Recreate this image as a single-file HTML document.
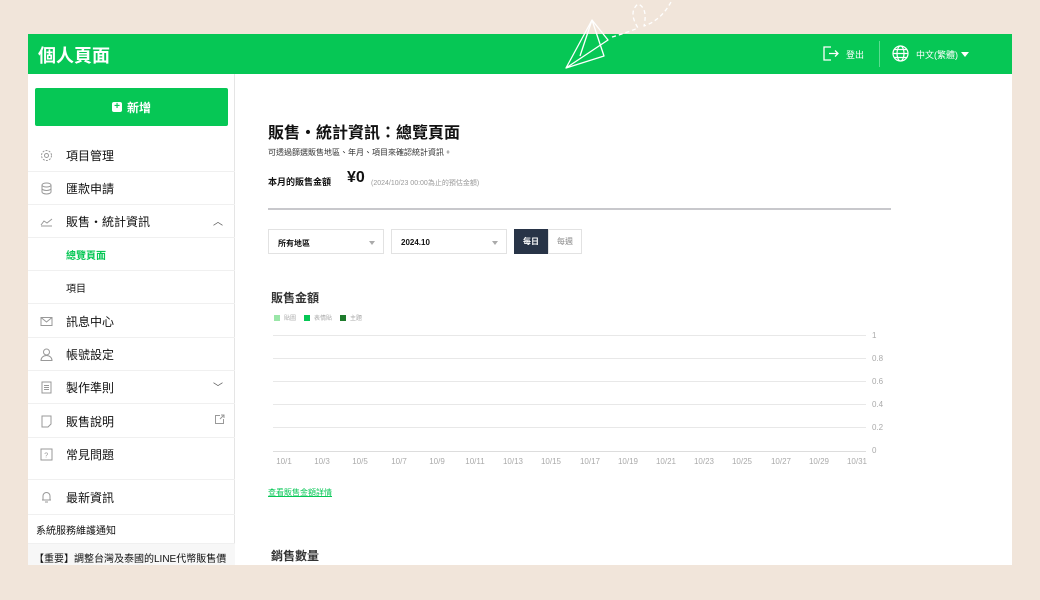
<!DOCTYPE html>
<html><head><meta charset="utf-8"><style>
*{margin:0;padding:0;box-sizing:border-box}
body{width:1040px;height:600px;background:#f1e5da;font-family:"Liberation Sans","Noto Sans CJK TC",sans-serif;position:relative;overflow:hidden;color:#111}
.a{position:absolute}
#hdr{left:28px;top:34px;width:984px;height:40px;background:#06c755}
#main{left:28px;top:74px;width:984px;height:491px;background:#fff;overflow:hidden}
#side{left:0;top:0;width:207px;height:491px;border-right:1px solid #e5e5e5}
.it{position:absolute;left:0;width:207px;height:33px;border-bottom:1px solid #f0f0f0;font-size:12px;display:flex;align-items:center;padding-left:38px}
.ic{position:absolute;left:12px;top:10px;width:13px;height:13px}
.gl{position:absolute;left:245px;width:593px;height:1px;background:#e8e8e8}
.yl{position:absolute;left:844px;font-size:8px;color:#aaa}
.xl{position:absolute;top:383px;font-size:8px;color:#aaa;width:30px;text-align:center}
</style></head><body>
<div id="hdr" class="a">
<div class="a" style="left:10px;top:8px;color:#fff;font-size:18px;font-weight:bold">個人頁面</div>
<svg class="a" style="left:794px;top:11px" width="17" height="17" viewBox="0 0 17 17" fill="none" stroke="#fff" stroke-width="1.3"><path d="M9 2H2v13h7M7 8.5h9M13 5.5l3 3-3 3"/></svg>
<div class="a" style="left:818px;top:14px;color:#fff;font-size:9px">登出</div>
<div class="a" style="left:851px;top:7px;width:1px;height:26px;background:#5bdc8f"></div>
<svg class="a" style="left:864px;top:11px" width="17" height="17" viewBox="0 0 17 17" fill="none" stroke="#fff" stroke-width="1.2"><circle cx="8.5" cy="8.5" r="7.5"/><ellipse cx="8.5" cy="8.5" rx="3.5" ry="7.5"/><path d="M1 8.5h15M2.5 4.5h12M2.5 12.5h12"/></svg>
<div class="a" style="left:888px;top:14px;color:#fff;font-size:9px">中文(繁體)</div>
<div class="a" style="left:933px;top:18px;border:4px solid transparent;border-top:5px solid #fff"></div>
</div>
<svg class="a" style="left:560px;top:0" width="120" height="72" viewBox="0 0 120 72" fill="none" stroke="#fff" stroke-width="1.3" stroke-linejoin="round">
<path d="M6 68 L32 20 L48 40 Z"/>
<path d="M32 20 L44 56 L6 68 M32 20 L20 56"/>
<path d="M52 37 Q66 33 78 28 Q68 12 78 4 Q88 8 84 26 Q102 20 112 0" stroke-dasharray="4 3"/>
</svg>
<div id="main" class="a">
<div id="side" class="a">
<div class="a" style="left:7px;top:14px;width:193px;height:38px;background:#06c755;border-radius:2px;color:#fff;font-size:12px;font-weight:bold;display:flex;align-items:center;justify-content:center"><span style="display:inline-block;width:10px;height:10px;background:#fff;border-radius:2px;margin-right:5px;color:#06c755;font-size:10px;line-height:10px;text-align:center">+</span>新增</div>
<div class="it" style="top:65px"><svg class="ic" viewBox="0 0 13 13" fill="none" stroke="#999"><circle cx="6.5" cy="6.5" r="2"/><circle cx="6.5" cy="6.5" r="5" stroke-dasharray="2 1.2"/></svg>項目管理</div>
<div class="it" style="top:98px"><svg class="ic" viewBox="0 0 13 13" fill="none" stroke="#999"><ellipse cx="6.5" cy="3" rx="4.5" ry="2"/><path d="M2 3v7c0 1 2 2 4.5 2s4.5-1 4.5-2V3M2 6.5c0 1 2 2 4.5 2s4.5-1 4.5-2"/></svg>匯款申請</div>
<div class="it" style="top:131px"><svg class="ic" viewBox="0 0 13 13" fill="none" stroke="#999"><path d="M1 11h11M1 10l3-4 3 2 5-4"/></svg>販售・統計資訊<span class="a" style="right:12px;top:8px;font-size:10px;color:#555">︿</span></div>
<div class="it" style="top:164px;color:#06c755;font-size:10px;font-weight:bold">總覽頁面</div>
<div class="it" style="top:197px;font-size:10px">項目</div>
<div class="it" style="top:231px"><svg class="ic" viewBox="0 0 13 13" fill="none" stroke="#999"><rect x="1" y="2.5" width="11" height="8"/><path d="M1 2.5l5.5 4.5 5.5-4.5"/></svg>訊息中心</div>
<div class="it" style="top:264px"><svg class="ic" viewBox="0 0 13 13" fill="none" stroke="#999"><circle cx="6.5" cy="4" r="3"/><path d="M1 12.5c0-3 2.5-5 5.5-5s5.5 2 5.5 5z"/></svg>帳號設定</div>
<div class="it" style="top:297px"><svg class="ic" viewBox="0 0 13 13" fill="none" stroke="#999"><rect x="2" y="1" width="9" height="11"/><path d="M4 4.5h5M4 6.5h5M4 8.5h5"/></svg>製作準則<span class="a" style="right:12px;top:8px;font-size:10px;color:#555">﹀</span></div>
<div class="it" style="top:331px"><svg class="ic" viewBox="0 0 13 13" fill="none" stroke="#999"><path d="M2 1h9v8l-3 3H2z"/></svg>販售說明<svg class="a" style="right:10px;top:9px" width="11" height="11" viewBox="0 0 11 11" fill="none" stroke="#999"><path d="M6 1.5H1.5v8h8V5M6 5l4-4M7 1h3v3"/></svg></div>
<div class="it" style="top:364px;height:42px;padding-bottom:8px"><svg class="ic" viewBox="0 0 13 13" fill="none" stroke="#999"><rect x="1" y="1" width="11" height="11"/><text x="4.3" y="9.5" font-size="7" fill="#999" stroke="none">?</text></svg>常見問題</div>
<div class="it" style="top:406px;height:35px"><svg class="ic" viewBox="0 0 13 13" fill="none" stroke="#999"><path d="M3 10V6a3.5 3.5 0 017 0v4H2h9M5 12h3"/></svg>最新資訊</div>
<div class="it" style="top:441px;padding-left:8px;font-size:10px;height:29px">系統服務維護通知</div>
<div class="it" style="top:470px;padding-left:6px;font-size:10px;height:22px;background:#f7f7f7;align-items:flex-start;padding-top:6px">【重要】調整台灣及泰國的LINE代幣販售價</div>
</div>
<div class="a" style="left:240px;top:45px;font-size:16px;font-weight:bold">販售・統計資訊：總覽頁面</div>
<div class="a" style="left:240px;top:73px;font-size:8px;color:#333">可透過篩選販售地區、年月、項目來確認統計資訊。</div>
<div class="a" style="left:240px;top:101px;font-size:9px;font-weight:bold">本月的販售金額</div>
<div class="a" style="left:319px;top:95px;font-size:16px;font-weight:bold">¥0</div>
<div class="a" style="left:343px;top:104px;font-size:7px;color:#999">(2024/10/23 00:00為止的預估金額)</div>
<div class="a" style="left:240px;top:134px;width:623px;height:2px;background:#c8c8cc"></div>
<div class="a" style="left:240px;top:155px;width:116px;height:25px;border:1px solid #e2e2e2;font-size:8px;font-weight:bold;padding:8px 9px">所有地區<span class="a" style="right:8px;top:11px;border:3.5px solid transparent;border-top:4px solid #aaa"></span></div>
<div class="a" style="left:363px;top:155px;width:116px;height:25px;border:1px solid #e2e2e2;font-size:8px;font-weight:bold;padding:8px 9px">2024.10<span class="a" style="right:8px;top:11px;border:3.5px solid transparent;border-top:4px solid #aaa"></span></div>
<div class="a" style="left:486px;top:155px;width:34px;height:25px;background:#283447;color:#fff;font-size:8px;font-weight:bold;text-align:center;line-height:25px">每日</div>
<div class="a" style="left:520px;top:155px;width:34px;height:25px;border:1px solid #e2e2e2;color:#888;font-size:8px;text-align:center;line-height:23px">每週</div>
<div class="a" style="left:243px;top:215px;font-size:12px;font-weight:bold;color:#333">販售金額</div>
<div class="a" style="left:246px;top:239px;font-size:6px;color:#aaa;display:flex;gap:4px;align-items:center"><i style="width:6px;height:6px;background:#9ae6a8"></i>貼圖 <i style="width:6px;height:6px;background:#06c755;margin-left:4px"></i>表情貼 <i style="width:6px;height:6px;background:#1e7b2c;margin-left:4px"></i>主題</div>
<div class="gl" style="top:261px"></div><div class="gl" style="top:284px"></div><div class="gl" style="top:307px"></div><div class="gl" style="top:330px"></div><div class="gl" style="top:353px"></div><div class="gl" style="top:377px;background:#ddd"></div>
<div class="yl" style="top:257px">1</div><div class="yl" style="top:280px">0.8</div><div class="yl" style="top:303px">0.6</div><div class="yl" style="top:326px">0.4</div><div class="yl" style="top:349px">0.2</div><div class="yl" style="top:372px">0</div>
<div class="xl" style="left:241px">10/1</div><div class="xl" style="left:279px">10/3</div><div class="xl" style="left:317px">10/5</div><div class="xl" style="left:356px">10/7</div><div class="xl" style="left:394px">10/9</div><div class="xl" style="left:432px">10/11</div><div class="xl" style="left:470px">10/13</div><div class="xl" style="left:508px">10/15</div><div class="xl" style="left:547px">10/17</div><div class="xl" style="left:585px">10/19</div><div class="xl" style="left:623px">10/21</div><div class="xl" style="left:661px">10/23</div><div class="xl" style="left:699px">10/25</div><div class="xl" style="left:738px">10/27</div><div class="xl" style="left:776px">10/29</div><div class="xl" style="left:814px">10/31</div>
<div class="a" style="left:240px;top:413px;font-size:8px;color:#06c755;text-decoration:underline">查看販售金額詳情</div>
<div class="a" style="left:243px;top:473px;font-size:12px;font-weight:bold;color:#333">銷售數量</div>
</div>
</body></html>
